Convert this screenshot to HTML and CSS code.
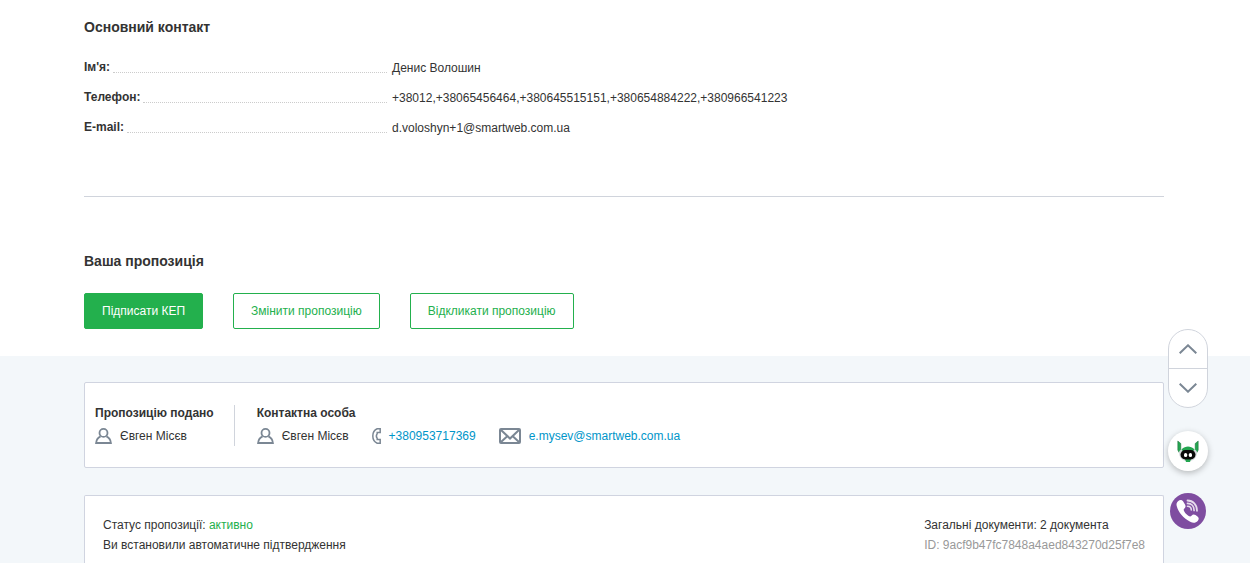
FILE: index.html
```html
<!DOCTYPE html>
<html lang="uk">
<head>
    <meta charset="UTF-8">
    <meta name="viewport" content="width=device-width, initial-scale=1.0">
    <title>Ваша пропозиція</title>
    <link rel="stylesheet" href="styles.css">
</head>
<body>
    <main class="page">
        <section class="contact">
            <h2 class="title">Основний контакт</h2>
            <dl class="contact-list">
                <div class="contact-row">
                    <dt>Ім'я:</dt>
                    <dd>Денис Волошин</dd>
                </div>
                <div class="contact-row">
                    <dt>Телефон:</dt>
                    <dd>+38012,+38065456464,+380645515151,+380654884222,+380966541223</dd>
                </div>
                <div class="contact-row">
                    <dt>E-mail:</dt>
                    <dd>d.voloshyn+1@smartweb.com.ua</dd>
                </div>
            </dl>
        </section>

        <section class="offer">
            <h2 class="title">Ваша пропозиція</h2>
            <div class="offer-actions">
                <button type="button" class="btn btn-primary">Підписати КЕП</button>
                <button type="button" class="btn">Змінити пропозицію</button>
                <button type="button" class="btn">Відкликати пропозицію</button>
            </div>
        </section>

        <section class="details">
            <div class="card people">
                <div class="person">
                    <h3 class="person-title">Пропозицію подано</h3>
                    <div class="person-info">
                        <span class="person-item">
                            <svg class="icon" width="17" height="16" viewBox="0 0 17 16" fill="none" stroke="#7b8794" stroke-width="1.8"><circle cx="8.5" cy="4.9" r="4"/><path d="M5.6 8.4C3 9.5 1.4 12 1.1 15h14.8c-.3-3-1.9-5.5-4.5-6.6"/></svg>
                            Євген Місєв
                        </span>
                    </div>
                </div>
                <div class="person">
                    <h3 class="person-title">Контактна особа</h3>
                    <div class="person-info">
                        <span class="person-item">
                            <svg class="icon" width="17" height="16" viewBox="0 0 17 16" fill="none" stroke="#7b8794" stroke-width="1.8"><circle cx="8.5" cy="4.9" r="4"/><path d="M5.6 8.4C3 9.5 1.4 12 1.1 15h14.8c-.3-3-1.9-5.5-4.5-6.6"/></svg>
                            Євген Місєв
                        </span>
                        <a href="tel:+380953717369" class="person-item">
                            <svg class="icon" width="9" height="16" viewBox="0 0 9 16" fill="none" stroke="#7b8794" stroke-width="1.5"><path d="M8.2 .8H5.2C2 2.2 .8 4.5 .8 8S2 13.8 5.2 15.2H8.2V11.4H5.2V10.400C4.200 9 4.200 7 5.200 5.600V4.6H8.2z"/></svg>
                            +380953717369
                        </a>
                        <a href="mailto:e.mysev@smartweb.com.ua" class="person-item">
                            <svg class="icon" width="22" height="16" viewBox="0 0 22 16" fill="none" stroke="#7b8794" stroke-width="2"><rect x="1" y="1" width="20" height="14" rx="1"/><path d="M2 2l9 8.5L20 2M2 14l6.500-6M20 14l-6.500-6"/></svg>
                            e.mysev@smartweb.com.ua
                        </a>
                    </div>
                </div>
            </div>

            <div class="card status">
                <div>
                    <p>Статус пропозиції: <span class="status-active">активно</span></p>
                    <p>Ви встановили автоматичне підтвердження</p>
                </div>
                <div>
                    <p>Загальні документи: 2 документа</p>
                    <p class="status-id">ID: 9acf9b47fc7848a4aed843270d25f7e8</p>
                </div>
            </div>
        </section>
    </main>

    <aside class="floating">
        <div class="scroll-nav">
            <button type="button" class="scroll-btn" aria-label="Вгору">
                <svg width="18" height="10" viewBox="0 0 18 10" fill="none" stroke="#7b8794" stroke-width="2"><path d="M.7 9.3L9 1.3l8.3 8"/></svg>
            </button>
            <button type="button" class="scroll-btn" aria-label="Вниз">
                <svg width="18" height="10" viewBox="0 0 18 10" fill="none" stroke="#7b8794" stroke-width="2"><path d="M.7 .7L9 8.7l8.3-8"/></svg>
            </button>
        </div>
        <button type="button" class="bot-btn" aria-label="Чат-бот">
            <svg width="22" height="24" viewBox="0 0 22 24">
                <path d="M.8 2L3.800 4.500V13L2 13.500 .8 11zM21.200 2L18.200 4.500V13l1.800.5L21.200 11z" fill="#23a550" stroke="#146b35" stroke-width=".5"/>
                <path d="M2 13C3.500 9.800 7 8.800 11 8.800s7.500 1 9 4.200c0 5.500-3 9.200-9 9.200S2 18.500 2 13z" fill="#d5dadd"/>
                <path d="M4.500 10.500C6.500 8.200 9 7.500 11 7.500s4.500.7 6.500 3l-2 2.500h-9zM8 20h6l-1 3H9z" fill="#23a550"/>
                <rect x="3.500" y="11" width="15" height="9.500" rx="4.700" fill="#080808"/>
                <rect x="7" y="14" width="3.200" height="4" rx="1.500" fill="#fff"/>
                <rect x="11.800" y="14" width="3.200" height="4" rx="1.500" fill="#fff"/>
            </svg>
        </button>
        <a href="viber://chat" class="viber-btn" aria-label="Viber">
            <svg width="36" height="36" viewBox="0 0 36 36">
                <circle cx="18" cy="18" r="18" fill="#7f4da0"/>
                <path d="M8 8.300c2-1.800 4-1.500 5.200.3l1.800 3c1 1.800.6 3-.8 4.200-.8.700-.6 1.500.1 2.700 1.200 2 2.500 3.400 4.400 4.500 1.200.7 2 .6 2.800-.3 1.200-1.300 2.500-1.500 4-.6l2 1.400c1.600 1.200 1.600 3 .2 4.400-2 2-4.500 2.300-7.500.8C13.500 25.500 8.500 19.500 6.700 13c-.5-2 0-3.500 1.300-4.700z" fill="#fff"/>
                <g fill="none" stroke="#e6dbec" stroke-linecap="round"><path d="M17.500 7.500c5.500 0 9.500 4.200 9.500 10.300" stroke-width="1.800"/><path d="M17.500 10.400c4 0 6.600 2.800 6.600 7" stroke-width="1.700"/><path d="M17.500 13.200c2.300 0 3.800 1.500 3.800 3.800" stroke-width="1.600"/></g>
            </svg>
        </a>
    </aside>
</body>
</html>
```
FILE: styles.css
```css
* {
    box-sizing: border-box;
}

body {
    margin: 0;
    font-family: "Liberation Sans", Arial, sans-serif;
    font-size: 12px;
    line-height: 20px;
    color: #333;
    background-color: #fff;
}

h2, h3, p, dl, dd {
    margin: 0;
}

a {
    color: #0095c9;
    text-decoration: none;
}

button {
    font: inherit;
    cursor: pointer;
}

.page {
    display: flex;
    flex-direction: column;
    min-height: 100vh;
}

.title {
    font-size: 14px;
    line-height: 20px;
    font-weight: bold;
}

/* Основний контакт */
.contact {
    margin: 0 86px 0 84px;
    padding: 17px 0 58px;
    border-bottom: 1px solid #d0d4dc;
}

.contact-list {
    display: flex;
    flex-direction: column;
    gap: 10px;
    margin-top: 21px;
}

.contact-row {
    display: flex;
    gap: 5px;
}

.contact-row dt {
    display: flex;
    gap: 3px;
    flex: 0 0 303px;
    font-weight: bold;
    line-height: 18px;
}

.contact-row dt::after {
    content: "";
    flex: 1;
    height: 14px;
    border-bottom: 1px dotted #ccc;
}

/* Ваша пропозиція */
.offer {
    padding: 54px 86px 27px 84px;
}

.offer-actions {
    display: flex;
    flex-wrap: wrap;
    gap: 30px;
    margin-top: 22px;
}

.btn {
    height: 36px;
    padding: 0 17px;
    border: 1px solid #23b04d;
    border-radius: 2px;
    background-color: #fff;
    color: #23b04d;
}

.btn-primary {
    background-color: #23b04d;
    color: #fff;
}

.details {
    display: flex;
    flex-direction: column;
    flex: 1;
    gap: 27px;
    padding: 26px 86px 0 84px;
    background-color: #f3f7fa;
}

.card {
    border: 1px solid #d0d4e0;
    border-radius: 2px;
    background-color: #fff;
}

.people {
    display: flex;
    padding: 22px 10px 21px;
}

.person + .person {
    margin-left: 20px;
    padding-left: 22px;
    border-left: 1px solid #d0d4dc;
}

.person-title {
    font-size: 12px;
    line-height: 16px;
}

.person-info {
    display: flex;
    gap: 23px;
    margin-top: 5px;
}

.person-item {
    display: flex;
    align-items: center;
    gap: 8px;
}

.icon {
    flex: none;
}

.status {
    display: flex;
    justify-content: space-between;
    flex: 1;
    padding: 19px 18px 8px;
    border-bottom: 0;
    border-radius: 2px 2px 0 0;
}

.status-active {
    color: #23b04d;
}

.status-id {
    color: #999;
}

/* Плаваючі кнопки справа */
.floating {
    position: fixed;
    right: 42px;
    bottom: 34px;
    display: flex;
    flex-direction: column;
    align-items: center;
}

.scroll-nav {
    display: flex;
    flex-direction: column;
    width: 40px;
    border: 1px solid #d0d4dc;
    border-radius: 20px;
    background-color: #fff;
    overflow: hidden;
}

.scroll-btn {
    display: flex;
    align-items: center;
    justify-content: center;
    height: 38px;
    padding: 0;
    border: 0;
    background: none;
}

.scroll-btn + .scroll-btn {
    height: 39px;
    border-top: 1px solid #d0d4dc;
}

.bot-btn {
    display: flex;
    align-items: center;
    justify-content: center;
    width: 40px;
    height: 40px;
    margin: 23px 0 22px;
    padding: 0;
    border: 0;
    border-radius: 50%;
    background-color: #fff;
    box-shadow: 0 2px 6px rgba(0, 0, 0, 0.25);
}

.viber-btn {
    display: flex;
}
```
